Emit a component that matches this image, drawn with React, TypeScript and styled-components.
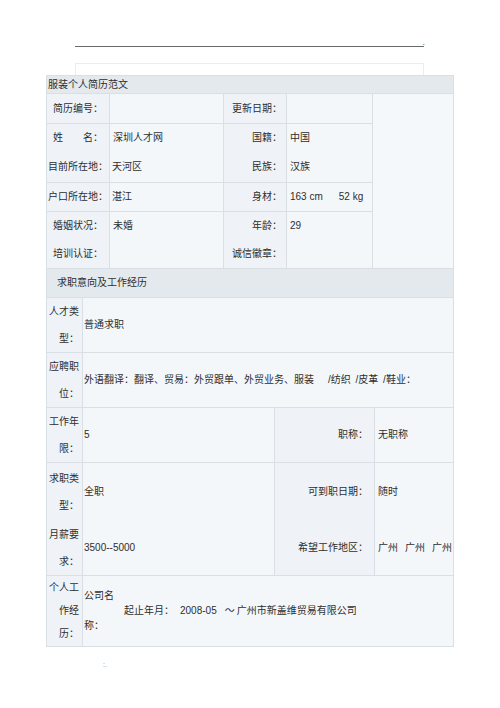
import styled, { createGlobalStyle, css } from "styled-components";

const GlobalStyle = createGlobalStyle`
  html, body {
    margin: 0;
    padding: 0;
    background: #ffffff;
  }
  body {
    font-family: "Liberation Sans", "Noto Sans CJK SC", sans-serif;
    color: #2e2e2e;
  }
`;

const Page = styled.div`
  width: 500px;
  height: 708px;
  padding-top: 46px;
  box-sizing: border-box;
`;

const Rule = styled.div`
  position: relative;
  margin: 0 76px 0 75px;
  border-top: 1px solid #6a6a6a;
  &::after {
    content: ".";
    position: absolute;
    right: -1px;
    top: -9px;
    font-size: 9px;
    line-height: 9px;
    color: #666;
  }
`;

const BlankBox = styled.div`
  margin: 16px 76px 0 75px;
  height: 12px;
  border: 1px solid #e9edf0;
  border-bottom: none;
  box-sizing: border-box;
`;

const Sheet = styled.div`
  margin-left: 46px;
  width: 407px;
`;

const Grid = styled.table<{ $next?: boolean }>`
  width: 100%;
  border-collapse: collapse;
  table-layout: fixed;
  font-size: 10px;
  line-height: 1;
  ${(p) =>
    p.$next &&
    css`
      margin-top: -1px;
    `}
`;

const Row = styled.tr<{ $h: number }>`
  height: ${(p) => p.$h}px;
`;

type Tone = "head" | "label" | "value" | "photo";

const tones: Record<Tone, string> = {
  head: "#e4e9ee",
  label: "#eff3f7",
  value: "#f4f7fa",
  photo: "#f5f8fa",
};

const Cell = styled.td<{
  $tone?: Tone;
  $align?: "left" | "center" | "right";
  $pl?: number;
  $pr?: number;
  $joined?: boolean;
}>`
  border: 1px solid #d9dfe5;
  ${(p) => p.$joined && "border-bottom-style: hidden;"}
  background: ${(p) => tones[p.$tone ?? "value"]};
  text-align: ${(p) => p.$align ?? "left"};
  vertical-align: middle;
  padding: 0 ${(p) => p.$pr ?? 3}px 0 ${(p) => p.$pl ?? 3}px;
  white-space: nowrap;
  overflow: visible;
`;

const Wrapped = styled.div<{ $lh: number }>`
  line-height: ${(p) => p.$lh}px;
`;

const Gap = styled.span<{ $w: number }>`
  display: inline-block;
  width: ${(p) => p.$w}px;
`;

const WorkLine = styled.div`
  display: flex;
  align-items: center;
`;

const CompanyLabel = styled.div`
  width: 31px;
  line-height: 30px;
  white-space: normal;
`;

const WorkText = styled.div`
  margin-left: 9px;
`;

const Footnote = styled.div`
  margin: 14px 0 0 103px;
  font-size: 7px;
  color: #8a8a8a;
`;

export default function App() {
  return (
    <Page>
      <GlobalStyle />
      <Rule />
      <BlankBox />
      <Sheet>
        <Grid>
          <colgroup>
            <col style={{ width: 63 }} />
            <col style={{ width: 114 }} />
            <col style={{ width: 63 }} />
            <col style={{ width: 86 }} />
            <col style={{ width: 81 }} />
          </colgroup>
          <tbody>
            <Row $h={18}>
              <Cell colSpan={5} $tone="head" $pl={1}>
                服装个人简历范文
              </Cell>
            </Row>
            <Row $h={30}>
              <Cell $tone="label" $align="center" $pl={0} $pr={0}>
                简历编号：
              </Cell>
              <Cell />
              <Cell $tone="label" $align="right" $pr={4}>
                更新日期：
              </Cell>
              <Cell />
              <Cell rowSpan={7} $tone="photo" />
            </Row>
            <Row $h={29}>
              <Cell $tone="label" $align="center" $pl={0} $pr={0} $joined>
                姓　　名：
              </Cell>
              <Cell $joined>深圳人才网</Cell>
              <Cell $tone="label" $align="right" $pr={4} $joined>
                国籍：
              </Cell>
              <Cell $joined>中国</Cell>
            </Row>
            <Row $h={30}>
              <Cell $tone="label" $align="center" $pl={0} $pr={0}>
                目前所在地：
              </Cell>
              <Cell $pl={2}>天河区</Cell>
              <Cell $tone="label" $align="right" $pr={4}>
                民族：
              </Cell>
              <Cell>汉族</Cell>
            </Row>
            <Row $h={29}>
              <Cell $tone="label" $align="center" $pl={0} $pr={0}>
                户口所在地：
              </Cell>
              <Cell $pl={2}>湛江</Cell>
              <Cell $tone="label" $align="right" $pr={4}>
                身材：
              </Cell>
              <Cell>
                163 cm<Gap $w={16} />52 kg
              </Cell>
            </Row>
            <Row $h={29}>
              <Cell $tone="label" $align="center" $pl={0} $pr={0} $joined>
                婚姻状况：
              </Cell>
              <Cell $joined>未婚</Cell>
              <Cell $tone="label" $align="right" $pr={4} $joined>
                年龄：
              </Cell>
              <Cell $joined>29</Cell>
            </Row>
            <Row $h={28}>
              <Cell $tone="label" $align="center" $pl={0} $pr={0}>
                培训认证：
              </Cell>
              <Cell />
              <Cell $tone="label" $align="right" $pr={4}>
                诚信徽章：
              </Cell>
              <Cell />
            </Row>
          </tbody>
        </Grid>

        <Grid $next>
          <colgroup>
            <col style={{ width: 36 }} />
            <col style={{ width: 192 }} />
            <col style={{ width: 100 }} />
            <col style={{ width: 79 }} />
          </colgroup>
          <tbody>
            <Row $h={29}>
              <Cell colSpan={4} $tone="head" $pl={10}>
                求职意向及工作经历
              </Cell>
            </Row>
            <Row $h={55}>
              <Cell $tone="label" $align="right" $pl={0} $pr={3}>
                <Wrapped $lh={27}>
                  人才类
                  <br />
                  型：
                </Wrapped>
              </Cell>
              <Cell colSpan={3} $pl={1}>
                普通求职
              </Cell>
            </Row>
            <Row $h={55}>
              <Cell $tone="label" $align="right" $pl={0} $pr={3}>
                <Wrapped $lh={27}>
                  应聘职
                  <br />
                  位：
                </Wrapped>
              </Cell>
              <Cell colSpan={3} $pl={1}>
                外语翻译：翻译、贸易：外贸跟单、外贸业务、服装
                <Gap $w={14} />
                /纺织<Gap $w={2} /> /皮革<Gap $w={2} /> /鞋业：
              </Cell>
            </Row>
            <Row $h={55}>
              <Cell $tone="label" $align="right" $pl={0} $pr={3}>
                <Wrapped $lh={27}>
                  工作年
                  <br />
                  限：
                </Wrapped>
              </Cell>
              <Cell $pl={1}>5</Cell>
              <Cell $tone="label" $align="right" $pr={6}>
                职称：
              </Cell>
              <Cell>无职称</Cell>
            </Row>
            <Row $h={58}>
              <Cell $tone="label" $align="right" $pl={0} $pr={3} $joined>
                <Wrapped $lh={27}>
                  求职类
                  <br />
                  型：
                </Wrapped>
              </Cell>
              <Cell $pl={1} $joined>
                全职
              </Cell>
              <Cell $tone="label" $align="right" $pr={6} $joined>
                可到职日期：
              </Cell>
              <Cell $joined>随时</Cell>
            </Row>
            <Row $h={53}>
              <Cell $tone="label" $align="right" $pl={0} $pr={3}>
                <Wrapped $lh={27}>
                  月薪要
                  <br />
                  求：
                </Wrapped>
              </Cell>
              <Cell $pl={1}>3500--5000</Cell>
              <Cell $tone="label" $align="right" $pr={6}>
                希望工作地区：
              </Cell>
              <Cell>
                广州<Gap $w={7} />广州<Gap $w={7} />广州
              </Cell>
            </Row>
            <Row $h={71}>
              <Cell $tone="label" $align="right" $pl={0} $pr={3}>
                <Wrapped $lh={23}>
                  个人工
                  <br />
                  作经
                  <br />
                  历：
                </Wrapped>
              </Cell>
              <Cell colSpan={3} $pl={1}>
                <WorkLine>
                  <CompanyLabel>
                    公司名
                    <br />
                    称：
                  </CompanyLabel>
                  <WorkText>
                    起止年月：<Gap $w={6} />2008-05<Gap $w={8} />～<Gap $w={2} />
                    广州市新盖维贸易有限公司
                  </WorkText>
                </WorkLine>
              </Cell>
            </Row>
          </tbody>
        </Grid>
      </Sheet>
      <Footnote>:.</Footnote>
    </Page>
  );
}
